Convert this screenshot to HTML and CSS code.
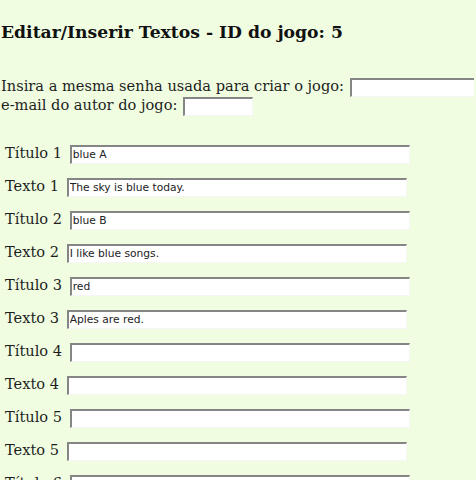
FILE: index.html
```html
<!DOCTYPE html>
<html lang="pt">
<head>
<meta charset="utf-8">
<title>Editar/Inserir Textos</title>
<link rel="stylesheet" href="styles.css">
</head>
<body>
<h1 class="title">Editar/Inserir Textos - ID do jogo: 5</h1>
<div class="auth">
  <div class="auth-line">Insira a mesma senha usada para criar o jogo: <input class="field field-pass" type="password"></div>
  <div class="auth-line">e-mail do autor do jogo: <input class="field field-mail" type="text" spellcheck="false"></div>
</div>
<div class="entries">
  <div class="entry">Título 1 <input class="field field-long" type="text" spellcheck="false" value="blue A"></div>
  <div class="entry">Texto 1 <input class="field field-long" type="text" spellcheck="false" value="The sky is blue today."></div>
  <div class="entry">Título 2 <input class="field field-long" type="text" spellcheck="false" value="blue B"></div>
  <div class="entry">Texto 2 <input class="field field-long" type="text" spellcheck="false" value="I like blue songs."></div>
  <div class="entry">Título 3 <input class="field field-long" type="text" spellcheck="false" value="red"></div>
  <div class="entry">Texto 3 <input class="field field-long" type="text" spellcheck="false" value="Aples are red."></div>
  <div class="entry">Título 4 <input class="field field-long" type="text" spellcheck="false"></div>
  <div class="entry">Texto 4 <input class="field field-long" type="text" spellcheck="false"></div>
  <div class="entry">Título 5 <input class="field field-long" type="text" spellcheck="false"></div>
  <div class="entry">Texto 5 <input class="field field-long" type="text" spellcheck="false"></div>
  <div class="entry">Título 6 <input class="field field-long" type="text" spellcheck="false"></div>
  <div class="entry">Texto 6 <input class="field field-long" type="text" spellcheck="false"></div>
</div>
</body>
</html>
```
FILE: styles.css
```css
html, body {
  margin: 0;
  padding: 0;
  background: #f0fde1;
}
body {
  font-family: "DejaVu Serif", serif;
  font-size: 14.6px;
  color: #1e1e1e;
  padding-left: 1px;
}
.title {
  font-size: 17.2px;
  font-weight: bold;
  margin: 21px 0 0 0;
  line-height: 22px;
  color: #111;
}
.auth {
  margin-top: 33px;
}
.auth-line {
  height: 19px;
  line-height: 19px;
  white-space: nowrap;
}
.field {
  box-sizing: border-box;
  height: 19px;
  margin: 0;
  padding: 0 1px;
  background: #fff;
  border-top: 2px solid #858585;
  border-left: 2px solid #858585;
  border-right: 1px solid #f6f6f6;
  border-bottom: 1px solid #f6f6f6;
  font-family: "DejaVu Sans", sans-serif;
  font-size: 10.7px;
  color: #222;
  vertical-align: middle;
  outline: none;
}
.field-pass { width: 124px; margin-left: 1px; border-right: 0; }
.field-mail { width: 70px; margin-left: 1px; }
.field-long { width: 340px; margin-left: 3px; }
.entries {
  margin-top: 22px;
  padding-left: 4px;
}
.entry {
  height: 33px;
  line-height: 33px;
  white-space: nowrap;
}
```
